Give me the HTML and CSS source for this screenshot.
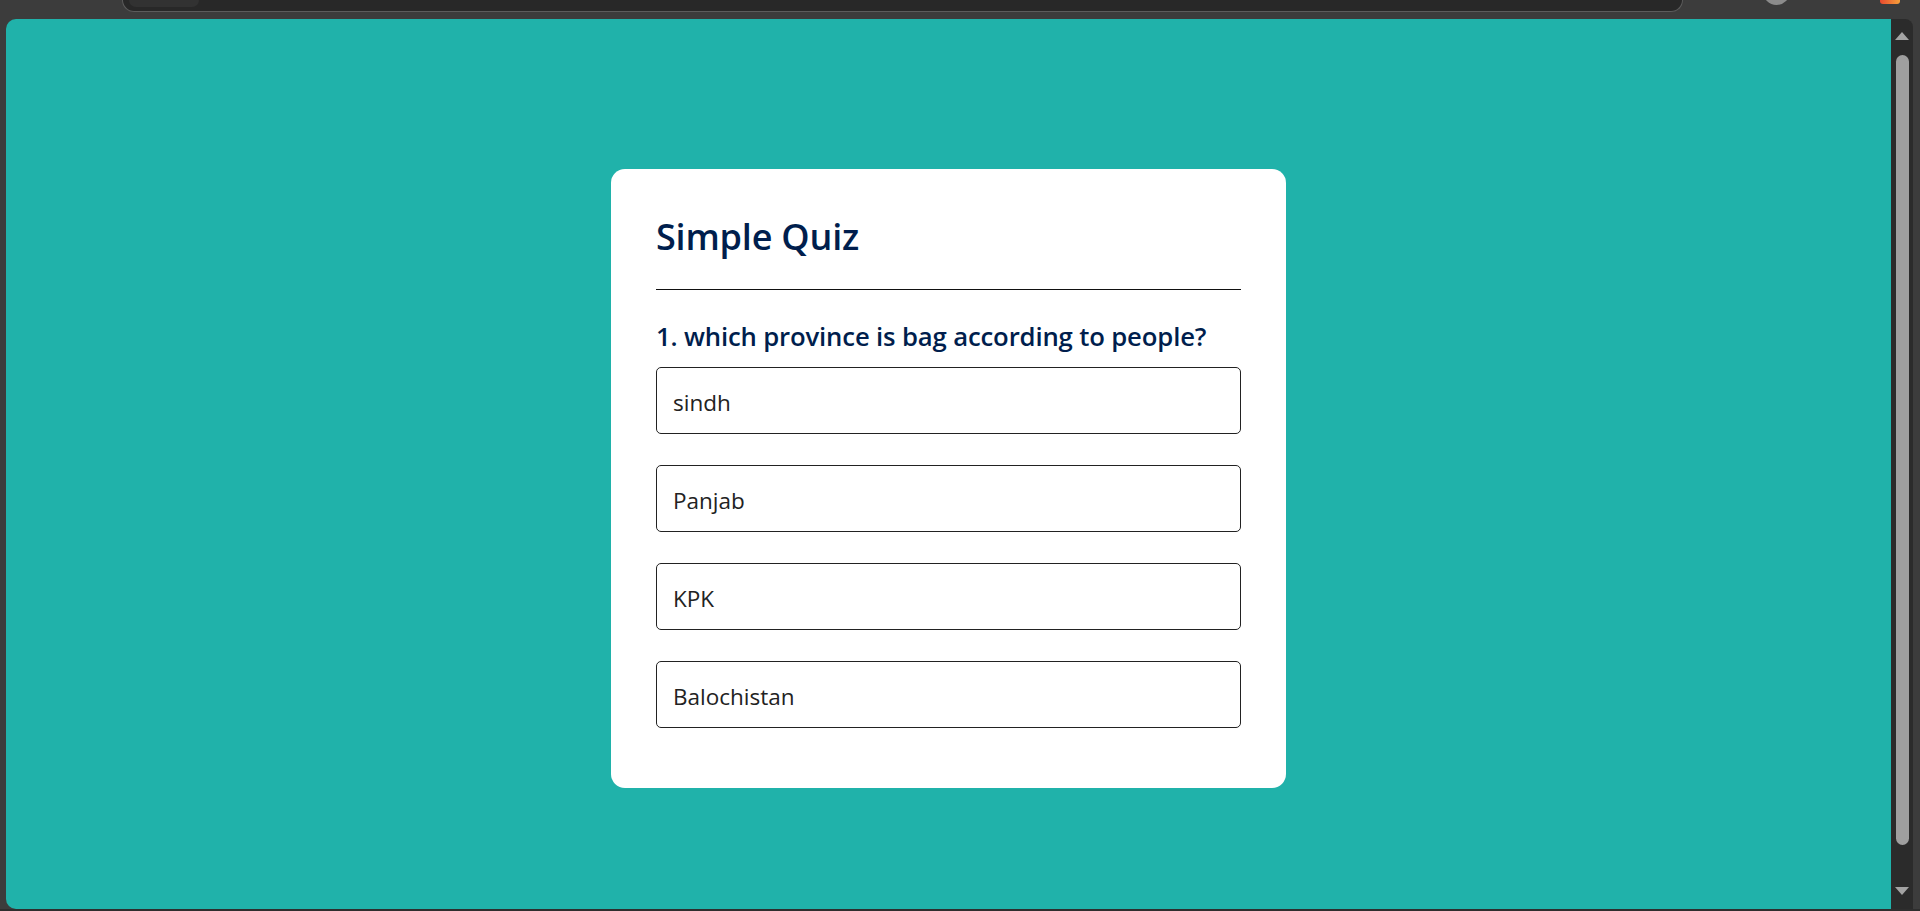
FILE: index.html
```html
<!DOCTYPE html>
<html lang="en">
<head>
<meta charset="utf-8">
<title>Simple Quiz</title>
<link rel="stylesheet" href="styles.css">
</head>
<body>
  <div class="chrome">
    <div class="addr"><div class="chip"></div></div>
    <div class="avatar"></div>
    <div class="ext"></div>
  </div>
  <div class="main">
    <div class="gutter-left"></div>
    <div class="viewport">
      <div class="app">
        <h1 class="title">Simple Quiz</h1>
        <div class="quiz">
          <h2 class="question">1. which province is bag according to people?</h2>
          <div class="answers">
            <button class="btn">sindh</button>
            <button class="btn">Panjab</button>
            <button class="btn">KPK</button>
            <button class="btn">Balochistan</button>
          </div>
        </div>
      </div>
    </div>
    <div class="scrollbar">
      <div class="arrow-up"></div>
      <div class="thumb"></div>
      <div class="arrow-down"></div>
    </div>
    <div class="gutter-right"></div>
  </div>
  <div class="bottom-strip"></div>
</body>
</html>
```

FILE: styles.css
```css
* { box-sizing: border-box; }

body {
  margin: 0;
  width: 1920px;
  height: 911px;
  overflow: hidden;
  background: #3c3c3c;
  display: flex;
  flex-direction: column;
  font-family: "Open Sans", "Noto Sans", sans-serif;
}

.chrome {
  height: 19px;
  flex-shrink: 0;
  display: flex;
  align-items: flex-start;
  overflow: hidden;
}

.addr {
  margin-left: 122px;
  width: 1561px;
  height: 12px;
  background: #282828;
  border: 1px solid #5c5c5c;
  border-top: none;
  border-radius: 0 0 16px 16px;
  padding-left: 6px;
}

.chip {
  width: 70px;
  height: 7px;
  background: #323232;
  border-radius: 0 0 8px 8px;
}

.avatar {
  width: 27px;
  height: 27px;
  margin-top: -22px;
  margin-left: 80px;
  border-radius: 50%;
  background: #8b8b8b;
}

.ext {
  width: 20px;
  height: 14px;
  margin-top: -10px;
  margin-left: 90px;
  border-radius: 3px;
  background: linear-gradient(90deg, #e8492f, #f5a03a);
}

.main {
  height: 890px;
  flex-shrink: 0;
  display: flex;
}

.gutter-left { width: 6px; flex-shrink: 0; }
.gutter-right { width: 7px; flex-shrink: 0; }

.viewport {
  flex: 1;
  background: #20b2aa;
  border-radius: 10px 0 0 10px;
  display: flex;
  justify-content: center;
  align-items: flex-start;
}

.app {
  margin-top: 150px;
  width: 675px;
  height: 619px;
  background: #fff;
  border-radius: 14px;
  padding: 43px 45px 0;
}

.title {
  margin: 0;
  font-size: 36px;
  line-height: 50px;
  font-weight: 600;
  color: #001e4d;
  padding-bottom: 27px;
  border-bottom: 1px solid #111;
  letter-spacing: -0.2px;
}

.quiz {
  padding-top: 29px;
}

.question {
  margin: 0 0 12px;
  font-size: 25.7px;
  line-height: 36px;
  font-weight: 600;
  color: #001e4d;
  letter-spacing: -0.15px;
}

.answers {
  display: flex;
  flex-direction: column;
  gap: 31px;
}

.btn {
  display: flex;
  align-items: center;
  width: 100%;
  height: 67px;
  padding: 3px 0 0 16px;
  background: #fff;
  color: #222;
  border: 1px solid #222;
  border-radius: 5px;
  font-family: "Open Sans", "Noto Sans", sans-serif;
  font-size: 22.5px;
  font-weight: 400;
  text-align: left;
}

.scrollbar {
  width: 22px;
  flex-shrink: 0;
  background: #2b2b2b;
  border-radius: 0 8px 0 0;
  display: flex;
  flex-direction: column;
  align-items: center;
  padding-top: 13px;
}

.arrow-up {
  width: 0;
  height: 0;
  border-left: 7px solid transparent;
  border-right: 7px solid transparent;
  border-bottom: 8px solid #a3a3a3;
}

.thumb {
  margin-top: 15px;
  width: 13px;
  height: 790px;
  border-radius: 7px;
  background: #9f9f9f;
}

.arrow-down {
  margin-top: 42px;
  width: 0;
  height: 0;
  border-left: 7px solid transparent;
  border-right: 7px solid transparent;
  border-top: 8px solid #a3a3a3;
}

.bottom-strip {
  height: 2px;
  background: #2e2e2e;
}
```
